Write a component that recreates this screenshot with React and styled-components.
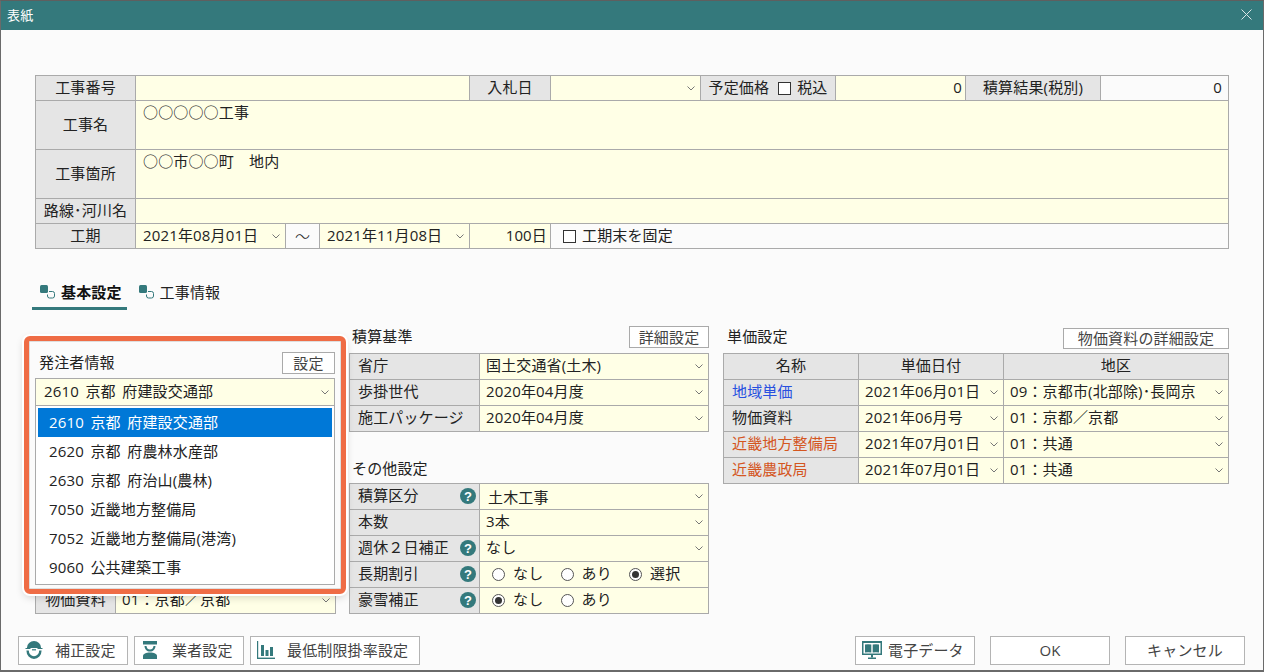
import React from 'react';
import styled, { createGlobalStyle } from 'styled-components';

const TEAL = '#34797c';
const LINE = '#aaaaaa';
const LABEL = '#e5e5e5';
const INPUT = '#ffffe6';
const PAGE = '#fbfbfb';

const GlobalStyle = createGlobalStyle`
  html, body {
    margin: 0;
    padding: 0;
    background: ${PAGE};
  }
  * {
    box-sizing: border-box;
  }
  body {
    font-family: "Open Sans", "Noto Sans CJK JP", sans-serif;
    font-size: 15px;
    letter-spacing: 0.15px;
    word-spacing: 2.5px;
    color: #222;
  }
`;

const Window = styled.div`
  width: 1264px;
  height: 672px;
  display: flex;
  flex-direction: column;
  overflow: hidden;
  border: 1px solid #6a6a6a;
  border-top-color: #5f5f5f;
  border-bottom-width: 2px;
  background: ${PAGE};
`;

const TitleBar = styled.div`
  height: 29px;
  flex: none;
  display: flex;
  align-items: center;
  justify-content: space-between;
  padding: 0 11px 2px 6px;
  background: ${TEAL};
  color: #fff;
  font-size: 13px;
`;

const Body = styled.div`
  flex: 1;
  display: flex;
  flex-direction: column;
  padding: 45px 0 0 34px;
`;

const Table = styled.div`
  display: grid;
  gap: 1px;
  padding: 1px;
  background: ${LINE};
  width: ${p => p.$width}px;
  grid-template-columns: ${p => p.$cols};
  grid-template-rows: ${p => p.$rows};
  grid-auto-rows: 25px;
`;

// 25px rows sit the text half a pixel higher than the 24px rows of the top table
const SettingTable = styled(Table)`
  & > div {
    padding-bottom: 4px;
  }
`;

const Label = styled.div`
  display: flex;
  align-items: center;
  justify-content: ${p => (p.$left ? 'space-between' : 'center')};
  padding: ${p => (p.$left ? '0 3px 3px 8px' : '0 0 3px')};
  background: ${LABEL};
  white-space: nowrap;
  overflow: hidden;
`;

const Value = styled.div`
  display: flex;
  align-items: ${p => (p.$top ? 'flex-start' : 'center')};
  justify-content: ${p => (p.$right ? 'flex-end' : 'flex-start')};
  padding: ${p => (p.$right ? `0 ${p.$right}px 3px 0` : '0 0 3px 7px')};
  background: ${p => (p.$plain ? PAGE : INPUT)};
  grid-column: ${p => p.$span || 'auto'};
  white-space: nowrap;
  line-height: 22px;
`;

const SelectCell = styled.div`
  display: flex;
  align-items: center;
  justify-content: space-between;
  padding: 0 5px 3px ${p => p.$indent || 6}px;
  background: ${INPUT};
  white-space: nowrap;
  overflow: hidden;
`;

const Shifted = styled.span`
  position: relative;
  top: 2px;
`;

const Dash = styled.div`
  display: flex;
  align-items: center;
  justify-content: center;
  padding-bottom: 2px;
  background: ${PAGE};
  font-weight: 300;
`;

const CheckWrap = styled.label`
  display: flex;
  align-items: center;
  gap: 6px;
  margin-left: ${p => p.$offset || 0}px;
`;

const Checkbox = styled.span`
  width: 13px;
  height: 13px;
  border: 1px solid #333;
  background: #fff;
  flex: none;
  margin-top: 3px;
`;

const Tabs = styled.div`
  display: flex;
  gap: 4px;
  margin: 32px 0 16px -3px;
`;

const Tab = styled.div`
  height: 29px;
  display: flex;
  align-items: center;
  gap: 6px;
  padding: 0 5px 5px 8px;
  font-weight: ${p => (p.$active ? 700 : 400)};
  color: ${p => (p.$active ? '#111' : '#222')};
  border-bottom: 3px solid ${p => (p.$active ? TEAL : 'transparent')};
`;

const Settings = styled.div`
  display: flex;
  align-items: flex-start;
  height: 288px;
`;

const LeftColumn = styled.div`
  position: relative;
  width: 301px;
  height: 100%;
  margin-right: 13px;
  display: flex;
  align-items: flex-end;
`;

const MiddleColumn = styled.div`
  width: 360px;
  margin-right: 14px;
`;

const RightColumn = styled.div`
  width: 506px;
`;

const SectionHead = styled.div`
  height: ${p => p.$height || 27}px;
  display: flex;
  align-items: ${p => p.$align || 'flex-start'};
  justify-content: space-between;
  padding: ${p => p.$pad || '0 0 0 3px'};
`;

const SectionTitle = styled.div`
  line-height: 20px;
  margin-top: ${p => p.$top || 0}px;
`;

const SmallButton = styled.div`
  height: ${p => p.$height || 22}px;
  width: ${p => p.$width}px;
  margin-top: ${p => p.$top || 0}px;
  padding-bottom: 2px;
  display: flex;
  align-items: center;
  justify-content: center;
  background: #fff;
  border: 1px solid ${LINE};
  color: #444;
`;

const Callout = styled.div`
  position: absolute;
  left: -11px;
  top: 10px;
  width: 322px;
  height: 258px;
  padding: 11px 6px 0 6px;
  background: ${PAGE};
  border: 5px solid #ef6c45;
  border-radius: 6px;
  box-shadow: 0 0 0 2px #fff, 0 3px 8px rgba(0, 0, 0, 0.18), inset 0 0 0 1px #dedede;
`;

const CalloutHead = styled.div`
  display: flex;
  align-items: center;
  justify-content: space-between;
  height: 22px;
  margin-bottom: 4px;
  padding-left: 4px;
`;

const HeadText = styled.span`
  padding-bottom: 3px;
`;

const ComboBox = styled.div`
  height: 28px;
  display: flex;
  align-items: center;
  justify-content: space-between;
  padding: 0 5px 3px 8px;
  background: ${INPUT};
  border: 1px solid ${LINE};
`;

const List = styled.div`
  height: 180px;
  padding: 2px;
  margin-top: -1px;
  background: #fff;
  border: 1px solid ${LINE};
`;

const ListItem = styled.div`
  height: 29px;
  display: flex;
  align-items: center;
  padding: 0 0 3px 11px;
  background: ${p => (p.$selected ? '#0078d7' : 'transparent')};
  color: ${p => (p.$selected ? '#fff' : '#222')};
`;

const LinkName = styled(Label)`
  color: ${p => p.$color || '#222'};
`;

const HelpMark = styled.span`
  width: 16px;
  height: 16px;
  flex: none;
  margin-top: 3px;
  display: flex;
  align-items: center;
  justify-content: center;
  border-radius: 50%;
  background: ${TEAL};
  color: #fff;
  font-family: "Liberation Sans", sans-serif;
  font-size: 13px;
  font-weight: 700;
`;

const RadioRow = styled.div`
  display: flex;
  align-items: center;
  padding: 0 0 3px 12px;
  background: ${INPUT};
`;

const RadioItem = styled.label`
  display: flex;
  align-items: center;
  gap: 8px;
  width: 68.5px;
`;

const RadioDot = styled.span`
  width: 13px;
  height: 13px;
  flex: none;
  margin-top: 3px;
  border-radius: 50%;
  border: 1px solid #555;
  background: #fff;
  display: flex;
  align-items: center;
  justify-content: center;
  &::after {
    content: '';
    width: 7px;
    height: 7px;
    border-radius: 50%;
    background: ${p => (p.$on ? '#333' : 'transparent')};
  }
`;

const Footer = styled.div`
  margin-top: auto;
  display: flex;
  gap: 6px;
  height: 29px;
  margin-bottom: 5px;
  margin-left: -17px;
  padding-right: 18px;
`;

const FootButton = styled.div`
  width: ${p => p.$width}px;
  display: flex;
  align-items: center;
  gap: ${p => p.$gap || 0}px;
  justify-content: ${p => (p.$icon ? 'flex-start' : 'center')};
  padding-left: ${p => (p.$icon ? p.$icon : 0)}px;
  padding-bottom: 2px;
  margin-left: ${p => p.$push || 0}px;
  background: #fff;
  border: 1px solid #b4b4b4;
  color: #444;
`;

const ChevronMark = styled.svg`
  flex: none;
  margin-top: 3px;
`;

const Chevron = () => (
  <ChevronMark width="8" height="5" viewBox="0 0 8 5" fill="none">
    <path d="M0.5 0.5 L4 4 L7.5 0.5" stroke="#777" strokeWidth="1" />
  </ChevronMark>
);

const CloseIcon = () => (
  <svg width="11" height="11" viewBox="0 0 11 11" stroke="#d8e6e6" strokeWidth="1">
    <path d="M0.5 0.5 L10.5 10.5 M10.5 0.5 L0.5 10.5" />
  </svg>
);

const TabIcon = () => (
  <svg width="15" height="14" viewBox="0 0 15 14" fill="none">
    <rect x="0" y="0" width="8" height="8" rx="1.5" fill={TEAL} />
    <path d="M9 6.5 H12.5 Q14.5 6.5 14.5 8.5 V11 Q14.5 13 12.5 13 H9.5 Q7.5 13 7.5 11 V9.5" stroke={TEAL} />
  </svg>
);

const HelmetIcon = () => (
  <svg width="18" height="18" viewBox="0 0 18 18">
    <path d="M2 6.5 A7 6.5 0 0 1 16 6.5 V7 H2 Z" fill={TEAL} />
    <rect x="0.5" y="7" width="5" height="1" fill={TEAL} />
    <rect x="12.5" y="7" width="5" height="1" fill={TEAL} />
    <rect x="7" y="8.2" width="4" height="1.2" fill={TEAL} />
    <path d="M1.4 9.5 H3.8 A5.2 5.8 0 0 0 14.2 9.5 H16.6 A7.6 8.4 0 0 1 1.4 9.5 Z" fill={TEAL} />
  </svg>
);

const WorkerIcon = () => (
  <svg width="14" height="18" viewBox="0 0 14 18" fill={TEAL}>
    <rect x="0" y="0" width="14" height="3.5" />
    <path d="M1.5 5 H3.5 C3.8 7.5 5 8.5 7 8.5 C9 8.5 10.2 7.5 10.5 5 H12.5 C12.3 8.5 10 10.5 7 10.5 C4 10.5 1.7 8.5 1.5 5 Z" />
    <path d="M7 11.5 C11 11.5 14 13 14 15 V18 H0 V15 C0 13 3 11.5 7 11.5 Z" />
  </svg>
);

const ChartIcon = () => (
  <svg width="18" height="18" viewBox="0 0 18 18" fill={TEAL}>
    <rect x="0" y="0" width="1.2" height="18" />
    <rect x="0" y="16.6" width="18" height="1.4" />
    <rect x="4" y="4" width="3" height="11" />
    <rect x="8.5" y="9" width="3" height="6" />
    <rect x="13" y="6" width="3" height="9" />
  </svg>
);

const MonitorIcon = () => (
  <svg width="20" height="18" viewBox="0 0 20 18" fill={TEAL}>
    <path d="M0 0 H20 V14 H0 Z M1.5 2 V12.5 H18.5 V2 Z" fillRule="evenodd" />
    <path d="M3 3.5 Q6 2.8 9.3 3.5 V11.5 Q6 10.8 3 11.5 Z" />
    <path d="M10.7 3.5 Q14 2.8 17 3.5 V11.5 Q14 10.8 10.7 11.5 Z" />
    <rect x="9" y="14" width="2" height="2.5" />
    <rect x="6" y="16.5" width="8" height="1.5" />
  </svg>
);

const clients = [
  '2610 京都 府建設交通部',
  '2620 京都 府農林水産部',
  '2630 京都 府治山(農林)',
  '7050 近畿地方整備局',
  '7052 近畿地方整備局(港湾)',
  '9060 公共建築工事',
];

const priceRows = [
  { name: '地域単価', color: '#2850e0', date: '2021年06月01日', area: '09：京都市(北部除)･長岡京' },
  { name: '物価資料', date: '2021年06月号', area: '01：京都／京都' },
  { name: '近畿地方整備局', color: '#d4561f', date: '2021年07月01日', area: '01：共通' },
  { name: '近畿農政局', color: '#d4561f', date: '2021年07月01日', area: '01：共通' },
];

function Select({ children, indent }) {
  return (
    <SelectCell $indent={indent}>
      <span>{children}</span>
      <Chevron />
    </SelectCell>
  );
}

function Radios({ items, selected }) {
  return (
    <RadioRow>
      {items.map(item => (
        <RadioItem key={item}>
          <RadioDot $on={item === selected} />
          {item}
        </RadioItem>
      ))}
    </RadioRow>
  );
}

export default function App() {
  return (
    <Window>
      <GlobalStyle />
      <TitleBar>
        表紙
        <CloseIcon />
      </TitleBar>
      <Body>
        <Table
          $width={1194}
          $cols="99px 149px 33px 149px 80px 149px 134px 129px 134px 127px"
          $rows="24px 48px 48px 24px 24px"
        >
          <Label>工事番号</Label>
          <Value $span="span 3" />
          <Label>入札日</Label>
          <Select />
          <Label>
            予定価格
            <CheckWrap $offset={9}>
              <Checkbox />
              税込
            </CheckWrap>
          </Label>
          <Value $right={3}>0</Value>
          <Label>積算結果(税別)</Label>
          <Value $plain $right={6}>0</Value>

          <Label>工事名</Label>
          <Value $span="span 9" $top>○○○○○工事</Value>

          <Label>工事箇所</Label>
          <Value $span="span 9" $top>○○市○○町　地内</Value>

          <Label>路線･河川名</Label>
          <Value $span="span 9" />

          <Label>工期</Label>
          <Select indent={7}>2021年08月01日</Select>
          <Dash>〜</Dash>
          <Select indent={7}>2021年11月08日</Select>
          <Value $right={3}>100日</Value>
          <Value $plain $span="span 5">
            <CheckWrap $offset={5}>
              <Checkbox />
              工期末を固定
            </CheckWrap>
          </Value>
        </Table>

        <Tabs>
          <Tab $active>
            <TabIcon />
            基本設定
          </Tab>
          <Tab>
            <TabIcon />
            工事情報
          </Tab>
        </Tabs>

        <Settings>
          <LeftColumn>
            <SettingTable $width={301} $cols="79px 219px" $rows="25px">
              <Label>物価資料</Label>
              <Select>01：京都／京都</Select>
            </SettingTable>
            <Callout>
              <CalloutHead>
                <HeadText>発注者情報</HeadText>
                <SmallButton $width={53}>設定</SmallButton>
              </CalloutHead>
              <ComboBox>
                {clients[0]}
                <Chevron />
              </ComboBox>
              <List>
                {clients.map((client, i) => (
                  <ListItem key={client} $selected={i === 0}>{client}</ListItem>
                ))}
              </List>
            </Callout>
          </LeftColumn>

          <MiddleColumn>
            <SectionHead>
              <SectionTitle>積算基準</SectionTitle>
              <SmallButton $width={80}>詳細設定</SmallButton>
            </SectionHead>
            <SettingTable $width={360} $cols="129px 228px" $rows="25px 25px 25px">
              <Label $left>省庁</Label>
              <Select>国土交通省(土木)</Select>
              <Label $left>歩掛世代</Label>
              <Select>2020年04月度</Select>
              <Label $left>施工パッケージ</Label>
              <Select>2020年04月度</Select>
            </SettingTable>

            <SectionHead $height={51} $align="flex-end" $pad="0 0 5px 3px">
              <SectionTitle>その他設定</SectionTitle>
            </SectionHead>
            <SettingTable $width={360} $cols="129px 228px" $rows="25px 25px 25px 25px 25px">
              <Label $left>積算区分<HelpMark>?</HelpMark></Label>
              <Select indent={8}><Shifted>土木工事</Shifted></Select>
              <Label $left>本数</Label>
              <Select>3本</Select>
              <Label $left>週休２日補正<HelpMark>?</HelpMark></Label>
              <Select>なし</Select>
              <Label $left>長期割引<HelpMark>?</HelpMark></Label>
              <Radios items={['なし', 'あり', '選択']} selected="選択" />
              <Label $left>豪雪補正<HelpMark>?</HelpMark></Label>
              <Radios items={['なし', 'あり']} selected="なし" />
            </SettingTable>
          </MiddleColumn>

          <RightColumn>
            <SectionHead $pad="0 0 0 4px">
              <SectionTitle>単価設定</SectionTitle>
              <SmallButton $width={166} $height={21} $top={2}>物価資料の詳細設定</SmallButton>
            </SectionHead>
            <SettingTable $width={506} $cols="134px 144px 224px" $rows="25px">
              <Label>名称</Label>
              <Label>単価日付</Label>
              <Label>地区</Label>
              {priceRows.map(row => (
                <React.Fragment key={row.name}>
                  <LinkName $left $color={row.color}>{row.name}</LinkName>
                  <Select>{row.date}</Select>
                  <Select>{row.area}</Select>
                </React.Fragment>
              ))}
            </SettingTable>
          </RightColumn>
        </Settings>

        <Footer>
          <FootButton $width={110} $icon={6} $gap={12}><HelmetIcon />補正設定</FootButton>
          <FootButton $width={110} $icon={8} $gap={15}><WorkerIcon />業者設定</FootButton>
          <FootButton $width={170} $icon={6} $gap={12}><ChartIcon />最低制限掛率設定</FootButton>
          <FootButton $width={120} $icon={6} $gap={6} $push={429}><MonitorIcon />電子データ</FootButton>
          <FootButton $width={120} $push={9}>OK</FootButton>
          <FootButton $width={120} $push={9}>キャンセル</FootButton>
        </Footer>
      </Body>
    </Window>
  );
}
